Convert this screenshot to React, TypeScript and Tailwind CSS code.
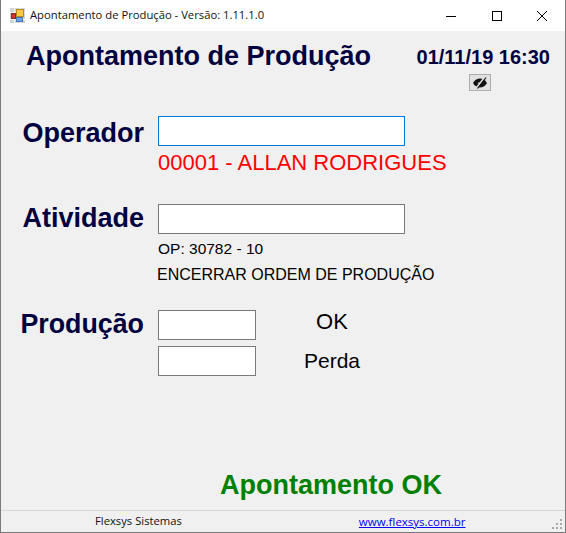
const navy = "text-[#000040]";

function AppIcon() {
  return (
    <svg width="15" height="15" viewBox="0 0 15 15" className="shrink-0">
      <rect width="15" height="15" fill="#d4d4d4" />
      <path d="M4.5 0V15M0 4.5H15M0 11.5H15M10.5 0V15" stroke="#f4f4f4" />
      <rect x="6.5" y="1.5" width="7" height="7" fill="#f8c846" stroke="#b98a1c" />
      <rect x="1.5" y="5.5" width="4" height="5" fill="#d8342c" stroke="#7d2b2b" />
      <rect x="6.5" y="9.5" width="6" height="4" fill="#6ea1e6" stroke="#4a78b8" />
    </svg>
  );
}

function Field({ w, active }: { w: string; active?: boolean }) {
  return <div className={`${w} h-[30px] bg-white border ${active ? "border-[#0078d7]" : "border-[#7a7a7a]"}`} />;
}

export default function App() {
  return (
    <div className="relative w-[566px] h-[533px] flex flex-col bg-[#f0f0f0] border-x border-b border-[#7a7a7a] overflow-hidden font-['Liberation_Sans',sans-serif] text-black">
      <div className="absolute left-[-1px] top-[453px] w-px h-[11px] bg-[#0f6a1e]" />
      <header className="h-[31px] shrink-0 bg-white flex items-center pl-[9px]">
        <AppIcon />
        <span className="ml-[5px] text-[11.25px] font-['Open_Sans',sans-serif] text-[#111]">Apontamento de Produção - Versão: 1.11.1.0</span>
        <div className="ml-auto flex items-center">
          <div className="w-[46px] h-[31px] flex items-center justify-center">
            <svg width="10" height="10" viewBox="0 0 10 10"><path d="M0 5.5H10" stroke="#000" /></svg>
          </div>
          <div className="w-[45px] h-[31px] flex items-center justify-center">
            <svg width="10" height="10" viewBox="0 0 10 10"><rect x="0.5" y="0.5" width="9" height="9" fill="none" stroke="#000" /></svg>
          </div>
          <div className="w-[46px] h-[31px] flex items-center justify-center">
            <svg width="10" height="10" viewBox="0 0 10 10"><path d="M0 0L10 10M10 0L0 10" stroke="#000" /></svg>
          </div>
        </div>
      </header>

      <main className="flex-1 flex flex-col min-h-0">
        <div className="flex pl-[25px] pr-[15px] pt-[10px] h-[85px] shrink-0">
          <h1 className={`text-[27px] leading-[30px] font-bold ${navy}`}>Apontamento de Produção</h1>
          <div className="ml-auto flex flex-col items-center pt-[6px]">
            <div className={`text-[20px] leading-[21px] font-bold ${navy}`}>01/11/19 16:30</div>
            <div className="mt-[6px] mr-[6px] w-[22px] h-[17px] bg-[#e1e1e1] border border-[#adadad] flex items-center justify-center">
              <svg width="16" height="12" viewBox="0 0 16 12">
                <path d="M1 6C3 2.6 5.5 1.5 8 1.5S13 2.6 15 6C13 9.4 10.5 10.5 8 10.5S3 9.4 1 6Z" fill="#111" />
                <circle cx="7" cy="6.2" r="1.2" fill="#8a8a8a" />
                <path d="M12.5 0.5L4 11.5" stroke="#e1e1e1" strokeWidth="1.8" />
                <path d="M14 0.5L5.5 11.5" stroke="#111" strokeWidth="1.2" />
              </svg>
            </div>
          </div>
        </div>

        <div className="grid grid-cols-[143px_1fr] gap-x-[14px] items-start">
          <div className={`text-[27px] leading-[30px] mt-[2px] font-bold text-right ${navy}`}>Operador</div>
          <div className="flex flex-col">
            <Field w="w-[247px]" active />
            <div className="text-[22px] leading-[24px] mt-[5px] text-[#ff0000]">00001 - ALLAN RODRIGUES</div>
          </div>
        </div>

        <div className="grid grid-cols-[143px_1fr] gap-x-[14px] items-start mt-[29px]">
          <div className={`text-[27px] leading-[30px] -mt-px font-bold text-right ${navy}`}>Atividade</div>
          <div className="flex flex-col">
            <Field w="w-[247px]" />
            <div className="text-[15.5px] leading-[18px] mt-[6px]">OP: 30782 - 10</div>
            <div className="text-[16px] leading-[18px] mt-[8px] -ml-px">ENCERRAR ORDEM DE PRODUÇÃO</div>
          </div>
        </div>

        <div className="grid grid-cols-[143px_1fr] gap-x-[14px] items-start mt-[26px]">
          <div className={`text-[26.8px] leading-[30px] -mt-px font-bold text-right ${navy}`}>Produção</div>
          <div className="flex flex-col gap-[6px]">
            <div className="flex items-center">
              <Field w="w-[98px]" />
              <span className="w-[152px] text-center text-[22px] leading-[24px] -mt-[7px]">OK</span>
            </div>
            <div className="flex items-center">
              <Field w="w-[98px]" />
              <span className="w-[152px] text-center text-[21px] leading-[24px]">Perda</span>
            </div>
          </div>
        </div>

        <div className="mt-auto pb-[9px] pl-[219px] text-[27px] leading-[32px] font-bold text-[#008000]">Apontamento OK</div>
      </main>

      <footer className="h-[22px] shrink-0 border-t border-[#d7d7d7] flex items-center text-[11.25px] font-['Open_Sans',sans-serif] relative">
        <span className="ml-[94px] text-[#111]">Flexsys Sistemas</span>
        <a className="ml-[177px] text-[11.5px] text-[#0000ff] underline">www.flexsys.com.br</a>
        <svg width="11" height="11" viewBox="0 0 11 11" className="absolute right-[2px] bottom-[2px]" fill="#a8a8a8">
          <rect x="8" y="0" width="2" height="2" /><rect x="4" y="4" width="2" height="2" /><rect x="8" y="4" width="2" height="2" />
          <rect x="0" y="8" width="2" height="2" /><rect x="4" y="8" width="2" height="2" /><rect x="8" y="8" width="2" height="2" />
        </svg>
      </footer>
    </div>
  );
}
